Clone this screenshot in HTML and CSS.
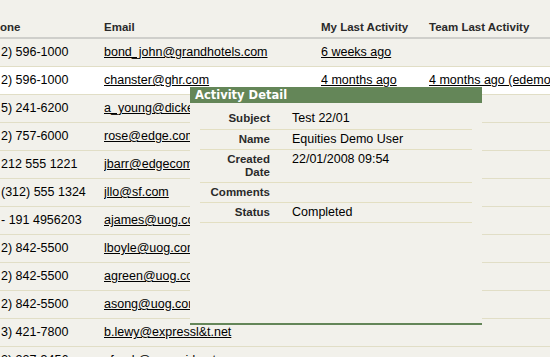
FILE: index.html
```html
<!DOCTYPE html>
<html>
<head>
<meta charset="utf-8">
<link rel="stylesheet" href="styles.css">
</head>
<body>
<div class="page">
  <table class="list">
    <colgroup><col class="c1"><col class="c2"><col class="c3"><col class="c4"></colgroup>
    <thead>
      <tr><th>one</th><th>Email</th><th>My Last Activity</th><th>Team Last Activity</th></tr>
    </thead>
    <tbody>
      <tr><td>2) 596-1000</td><td><a>bond_john@grandhotels.com</a></td><td><a>6 weeks ago</a></td><td></td></tr>
      <tr class="hl"><td>2) 596-1000</td><td><a>chanster@ghr.com</a></td><td><a>4 months ago</a></td><td><a>4 months ago (edemo)</a></td></tr>
      <tr><td>5) 241-6200</td><td><a>a_young@dickenson.com</a></td><td></td><td></td></tr>
      <tr><td>2) 757-6000</td><td><a>rose@edge.com</a></td><td></td><td></td></tr>
      <tr><td>212 555 1221</td><td><a>jbarr@edgecomm.com</a></td><td></td><td></td></tr>
      <tr><td>(312) 555 1324</td><td><a>jllo@sf.com</a></td><td></td><td></td></tr>
      <tr><td>- 191 4956203</td><td><a>ajames@uog.com</a></td><td></td><td></td></tr>
      <tr><td>2) 842-5500</td><td><a>lboyle@uog.com</a></td><td></td><td></td></tr>
      <tr><td>2) 842-5500</td><td><a>agreen@uog.com</a></td><td></td><td></td></tr>
      <tr><td>2) 842-5500</td><td><a>asong@uog.com</a></td><td></td><td></td></tr>
      <tr><td>3) 421-7800</td><td><a>b.lewy@expressl&amp;t.net</a></td><td></td><td></td></tr>
      <tr><td>2) 227-3456</td><td><a>sfrank@pyramid.net</a></td><td></td><td></td></tr>
    </tbody>
  </table>

  <div class="popup">
    <div class="popup-head">Activity Detail</div>
    <div class="popup-body">
      <table class="detail">
        <tr class="first"><th>Subject</th><td>Test 22/01</td></tr>
        <tr><th>Name</th><td>Equities Demo User</td></tr>
        <tr><th>Created<br>Date</th><td>22/01/2008 09:54</td></tr>
        <tr><th>Comments</th><td></td></tr>
        <tr><th>Status</th><td>Completed</td></tr>
      </table>
    </div>
  </div>
</div>
</body>
</html>
```

FILE: styles.css
```css
html, body {
  margin: 0;
  padding: 0;
  background: #f2f1eb;
  overflow: hidden;
}
body {
  width: 550px;
  height: 357px;
  font-family: "Liberation Sans", Arial, sans-serif;
  font-size: 12.5px;
  color: #000;
}
.page {
  position: relative;
  width: 550px;
  height: 357px;
  overflow: hidden;
}
.list {
  border-collapse: collapse;
  table-layout: fixed;
  width: 600px;
}
.c1 { width: 104px; }
.c2 { width: 217px; }
.c3 { width: 108px; }
.c4 { width: 171px; }
.list th {
  height: 38px;
  box-sizing: border-box;
  padding: 0 0 3px 0;
  vertical-align: bottom;
  text-align: left;
  font-size: 11.5px;
  line-height: 14px;
  font-weight: bold;
  color: #2a2a2a;
  border-bottom: 2px solid #cfcfcb;
  white-space: nowrap;
}
.list td {
  height: 27px;
  padding: 0;
  line-height: 15px;
  vertical-align: middle;
  border-bottom: 1px solid #e1dec6;
  white-space: nowrap;
  overflow: hidden;
}
.list tr.hl td { background: #fff; }
.list td:first-child { padding-left: 1px; }
.list a {
  color: #000;
  text-decoration: underline;
}

.popup {
  position: absolute;
  left: 190px;
  top: 87px;
  width: 292px;
  background: #f2f1eb;
  border-bottom: 2px solid #648658;
}
.popup-head {
  background: #648658;
  color: #fff;
  height: 16px;
  line-height: 17px;
  padding-left: 5px;
  font-family: "DejaVu Sans", Verdana, sans-serif;
  font-weight: bold;
  font-size: 11.5px;
}
.popup-body {
  height: 220px;
  padding: 6px 10px 0;
  box-sizing: border-box;
}
.detail {
  width: 100%;
  border-collapse: collapse;
}
.detail th, .detail td {
  padding: 3px 0;
  line-height: 13px;
  vertical-align: top;
  border-bottom: 1px solid #e3dfc2;
}
.detail tr.first th, .detail tr.first td {
  padding-bottom: 4px;
}
.detail th {
  width: 70px;
  text-align: right;
  font-size: 11.5px;
  font-weight: bold;
  color: #2a2a2a;
}
.detail td {
  padding-left: 22px;
  font-size: 12.5px;
  color: #000;
}
```
